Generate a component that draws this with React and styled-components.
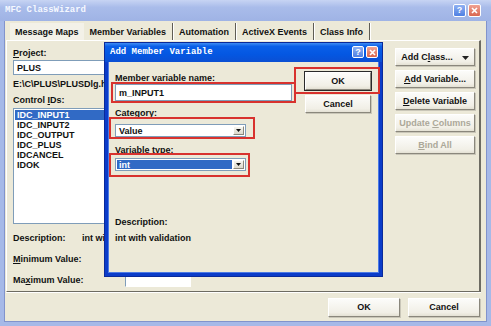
import React from "react";
import styled, { createGlobalStyle } from "styled-components";

const GlobalStyle = createGlobalStyle`
  html, body { margin: 0; padding: 0; background: #ffffff; }
  body { font-family: "Liberation Sans", Arial, sans-serif; }
  * { box-sizing: border-box; }
`;

const Window = styled.div`
  position: relative;
  width: 491px;
  height: 326px;
  display: flex;
  flex-direction: column;
  background: #ece9d8;
  overflow: hidden;
  font: bold 9px "Liberation Sans", Arial, sans-serif;
  color: #111;
`;

const TitleBar = styled.div`
  height: 21px;
  flex: none;
  display: flex;
  align-items: center;
  justify-content: space-between;
  padding: 0 ${(p) => p.$padRight || 10}px 1px 5px;
  background: ${(p) =>
    p.$active
      ? "linear-gradient(to bottom, #3f8cf3 0%, #0a5fe8 18%, #0457e2 60%, #0b4fd3 100%)"
      : "linear-gradient(to bottom, #c7d4f3 0%, #a9bcea 35%, #9fb3e5 100%)"};
  color: ${(p) => (p.$active ? "#ffffff" : "#f5f8ff")};
  font: bold 9px "Liberation Mono", "DejaVu Sans Mono", monospace;
  height: ${(p) => p.$height || 21}px;
`;

const CaptionButtons = styled.div`
  display: flex;
  gap: 2px;
`;

const CaptionButton = styled.div`
  width: ${(p) => p.$size}px;
  height: ${(p) => p.$size}px;
  border: 1px solid #ffffff;
  border-radius: 2px;
  display: flex;
  align-items: center;
  justify-content: center;
  color: #fff;
  font: bold 9px "Liberation Sans", Arial, sans-serif;
  background: ${(p) => p.$bg};
`;

const Frame = styled.div`
  flex: 1;
  display: flex;
  flex-direction: column;
  border-style: solid;
  border-width: 0 4px 4px 4px;
  border-color: #a6b9e8;
  box-shadow: inset 1px 0 0 #8193cc, inset -1px 0 0 #8193cc, inset 0 -1px 0 #8193cc;
`;

const Tabs = styled.div`
  height: 19px;
  flex: none;
  display: flex;
  align-items: flex-end;
  padding-left: 6px;
`;

const Tab = styled.div`
  height: 17px;
  display: flex;
  align-items: center;
  padding: 0 ${(p) => p.$pad || 6}px;
  background: ${(p) => (p.$light ? "#f3f1e8" : "transparent")};
  border-right: ${(p) => (p.$sep ? "1px solid #5f5d55" : "none")};
  box-shadow: ${(p) => (p.$sep ? "1px 0 0 #ffffff" : "none")};
  white-space: nowrap;
`;

const Panel = styled.div`
  margin-left: 2px;
  width: 475px;
  height: 252px;
  flex: none;
  display: flex;
  justify-content: space-between;
  padding: 6px 4px 0 6px;
  border-top: 1px solid #ffffff;
  border-left: 1px solid #ffffff;
  border-right: 2px solid #6d6b62;
  border-bottom: 1px solid #6d6b62;
  box-shadow: 0 1px 0 #ffffff;
`;

const LeftColumn = styled.div`
  display: flex;
  flex-direction: column;
  width: 300px;
`;

const Label = styled.div`
  line-height: 12px;
  height: 12px;
  margin-top: ${(p) => p.$mt || 0}px;
  white-space: nowrap;
`;

const U = styled.span`
  text-decoration: underline;
`;

const EditBox = styled.div`
  margin-top: ${(p) => p.$mt || 0}px;
  margin-left: ${(p) => p.$ml || 0}px;
  width: ${(p) => p.$w}px;
  height: ${(p) => p.$h || 15}px;
  background: #ffffff;
  border: 1px solid #7f9db9;
  border-color: ${(p) => (p.$open ? "#ffffff #ffffff #ffffff #7f9db9" : "#7f9db9")};
  display: flex;
  align-items: center;
  padding-left: 3px;
`;

const ListBox = styled.div`
  margin-top: 2px;
  width: 250px;
  height: 116px;
  background: #ffffff;
  border: 1px solid #7f9db9;
  padding: 1px 1px 0 1px;
  display: flex;
  flex-direction: column;
`;

const ListItem = styled.div`
  height: 10px;
  line-height: 10px;
  padding-left: 2px;
  background: ${(p) => (p.$selected ? "#316ac5" : "transparent")};
  color: ${(p) => (p.$selected ? "#ffffff" : "#111")};
`;

const FieldRow = styled.div`
  display: flex;
  align-items: center;
  height: ${(p) => p.$h || 12}px;
  margin-top: ${(p) => p.$mt || 0}px;
`;

const FieldName = styled.div`
  width: 69px;
  flex: none;
  white-space: nowrap;
`;

const FieldValue = styled.div`
  width: 23px;
  overflow: hidden;
  white-space: nowrap;
`;

const RightColumn = styled.div`
  width: 80px;
  display: flex;
  flex-direction: column;
  gap: 4px;
  padding-top: 1px;
`;

const Button = styled.div`
  width: ${(p) => p.$w || 80}px;
  height: ${(p) => p.$h || 18}px;
  line-height: ${(p) => (p.$h || 18) - 2}px;
  flex: none;
  text-align: center;
  white-space: nowrap;
  color: ${(p) => (p.$disabled ? "#aca899" : "#111")};
  background: linear-gradient(to bottom, #fcfcfa, #f1efe6 80%, #e4e1d4);
  border: 1px solid;
  border-color: #ffffff #8a877c #8a877c #ffffff;
  outline: ${(p) => (p.$default ? "1px solid #2a2a2a" : "none")};
  box-shadow: ${(p) => (p.$default ? "none" : "1px 1px 0 #c9c6b8")};

  svg {
    margin-left: 9px;
    vertical-align: middle;
  }
`;

const BottomBar = styled.div`
  flex: 1;
  display: flex;
  justify-content: flex-end;
  align-items: flex-start;
  gap: 8px;
  padding: 6px 7px 0 0;
`;

const Dialog = styled.div`
  position: absolute;
  left: 105px;
  top: 43px;
  width: 277px;
  height: 233px;
  display: flex;
  flex-direction: column;
  background: #ece9d8;
  box-shadow: 0 0 0 1px #0a2a9a;
`;

const DialogBody = styled.div`
  flex: 1;
  display: grid;
  grid-template-columns: 177px 66px;
  column-gap: 13px;
  padding: 10px 0 0 7px;
  border-style: solid;
  border-width: 0 3px 3px 3px;
  border-color: #0b3cc9;
  box-shadow: inset 1px 0 0 #4b7ae6, inset -1px 0 0 #4b7ae6, inset 0 -1px 0 #4b7ae6;
`;

const Fields = styled.div`
  display: flex;
  flex-direction: column;
`;

const DialogButtons = styled.div`
  display: flex;
  flex-direction: column;
  gap: 5px;
`;

const Combo = styled.div`
  margin-top: ${(p) => p.$mt || 0}px;
  width: 131px;
  height: 13px;
  background: #ffffff;
  border: 1px solid #7f9db9;
  display: flex;
  padding: 1px;
`;

const ComboText = styled.div`
  flex: 1;
  display: flex;
  align-items: center;
  padding-left: 2px;
  margin-right: 1px;
  background: ${(p) => (p.$selected ? "#316ac5" : "transparent")};
  color: ${(p) => (p.$selected ? "#ffffff" : "#111")};
`;

const ComboArrow = styled.div`
  width: 11px;
  display: flex;
  align-items: center;
  justify-content: center;
  background: linear-gradient(to bottom, #f6f5ef, #dcd9cc);
  border: 1px solid;
  border-color: #ffffff #8a877c #8a877c #ffffff;
`;

const Highlight = styled.div`
  position: absolute;
  left: ${(p) => p.$x}px;
  top: ${(p) => p.$y}px;
  width: ${(p) => p.$w}px;
  height: ${(p) => p.$h}px;
  border: 2px solid #d8322e;
  pointer-events: none;
`;

const Arrow = () => (
  <svg width="7" height="4" viewBox="0 0 7 4">
    <path d="M0 0h7L3.5 4z" fill="#222" />
  </svg>
);

const DropArrow = () => (
  <svg width="5" height="3" viewBox="0 0 5 3">
    <path d="M0 0h5L2.5 3z" fill="#111" />
  </svg>
);

const Caption = ({ size }) => (
  <CaptionButtons>
    <CaptionButton $size={size} $bg="linear-gradient(#8fb0f2, #4f80e3)">?</CaptionButton>
    <CaptionButton $size={size} $bg="linear-gradient(#f0a292, #d9664f)">
      <svg width="7" height="7" viewBox="0 0 7 7">
        <path d="M1 1l5 5M6 1l-5 5" stroke="#fff" strokeWidth="1.6" />
      </svg>
    </CaptionButton>
  </CaptionButtons>
);

const controls = ["IDC_INPUT1", "IDC_INPUT2", "IDC_OUTPUT", "IDC_PLUS", "IDCANCEL", "IDOK"];

export default function App() {
  return (
    <>
      <GlobalStyle />
      <Window>
        <TitleBar>
          <span>MFC ClassWizard</span>
          <Caption size={13} />
        </TitleBar>
        <Frame>
          <Tabs>
            <Tab $light $pad={5}>Message Maps</Tab>
            <Tab $sep $pad={6}>Member Variables</Tab>
            <Tab $sep>Automation</Tab>
            <Tab $sep>ActiveX Events</Tab>
            <Tab $sep>Class Info</Tab>
          </Tabs>
          <Panel>
            <LeftColumn>
              <Label><U>P</U>roject:</Label>
              <EditBox $mt={1} $w={250}>PLUS</EditBox>
              <Label $mt={3}>E:\C\PLUS\PLUSDlg.h</Label>
              <Label $mt={4}>Control <U>I</U>Ds:</Label>
              <ListBox>
                {controls.map((c, i) => (
                  <ListItem key={c} $selected={i === 0}>{c}</ListItem>
                ))}
              </ListBox>
              <FieldRow $mt={8}>
                <FieldName>Description:</FieldName>
                <FieldValue>int with validation</FieldValue>
              </FieldRow>
              <FieldRow $mt={9}>
                <FieldName><U>M</U>inimum Value:</FieldName>
              </FieldRow>
              <FieldRow $mt={8} $h={14}>
                <FieldName>Ma<U>x</U>imum Value:</FieldName>
                <EditBox $w={66} $h={13} $ml={43} $open />
              </FieldRow>
            </LeftColumn>
            <RightColumn>
              <Button>Add C<U>l</U>ass...<Arrow /></Button>
              <Button><U>A</U>dd Variable...</Button>
              <Button><U>D</U>elete Variable</Button>
              <Button $disabled>Update <U>C</U>olumns</Button>
              <Button $disabled><U>B</U>ind All</Button>
            </RightColumn>
          </Panel>
          <BottomBar>
            <Button $w={72} $h={19}>OK</Button>
            <Button $w={72} $h={19}>Cancel</Button>
          </BottomBar>
        </Frame>

        <Dialog>
          <TitleBar $active $height={19} $padRight={4}>
            <span>Add Member Variable</span>
            <Caption size={12} />
          </TitleBar>
          <DialogBody>
            <Fields>
              <Label>Member variable name:</Label>
              <EditBox $w={177} $h={17}>m_INPUT1</EditBox>
              <Label $mt={6}>Category:</Label>
              <Combo $mt={5}>
                <ComboText>Value</ComboText>
                <ComboArrow><DropArrow /></ComboArrow>
              </Combo>
              <Label $mt={7}>Variable type:</Label>
              <Combo $mt={2}>
                <ComboText $selected>int</ComboText>
                <ComboArrow><DropArrow /></ComboArrow>
              </Combo>
              <Label $mt={45}>Description:</Label>
              <Label $mt={4}>int with validation</Label>
            </Fields>
            <DialogButtons>
              <Button $w={66} $h={18} $default>OK</Button>
              <Button $w={66} $h={18}>Cancel</Button>
            </DialogButtons>
          </DialogBody>
          <Highlight $x={6} $y={39} $w={185} $h={21} />
          <Highlight $x={189} $y={24} $w={86} $h={27} />
          <Highlight $x={4} $y={74} $w={146} $h={22} />
          <Highlight $x={4} $y={110} $w={141} $h={24} />
        </Dialog>
      </Window>
    </>
  );
}
